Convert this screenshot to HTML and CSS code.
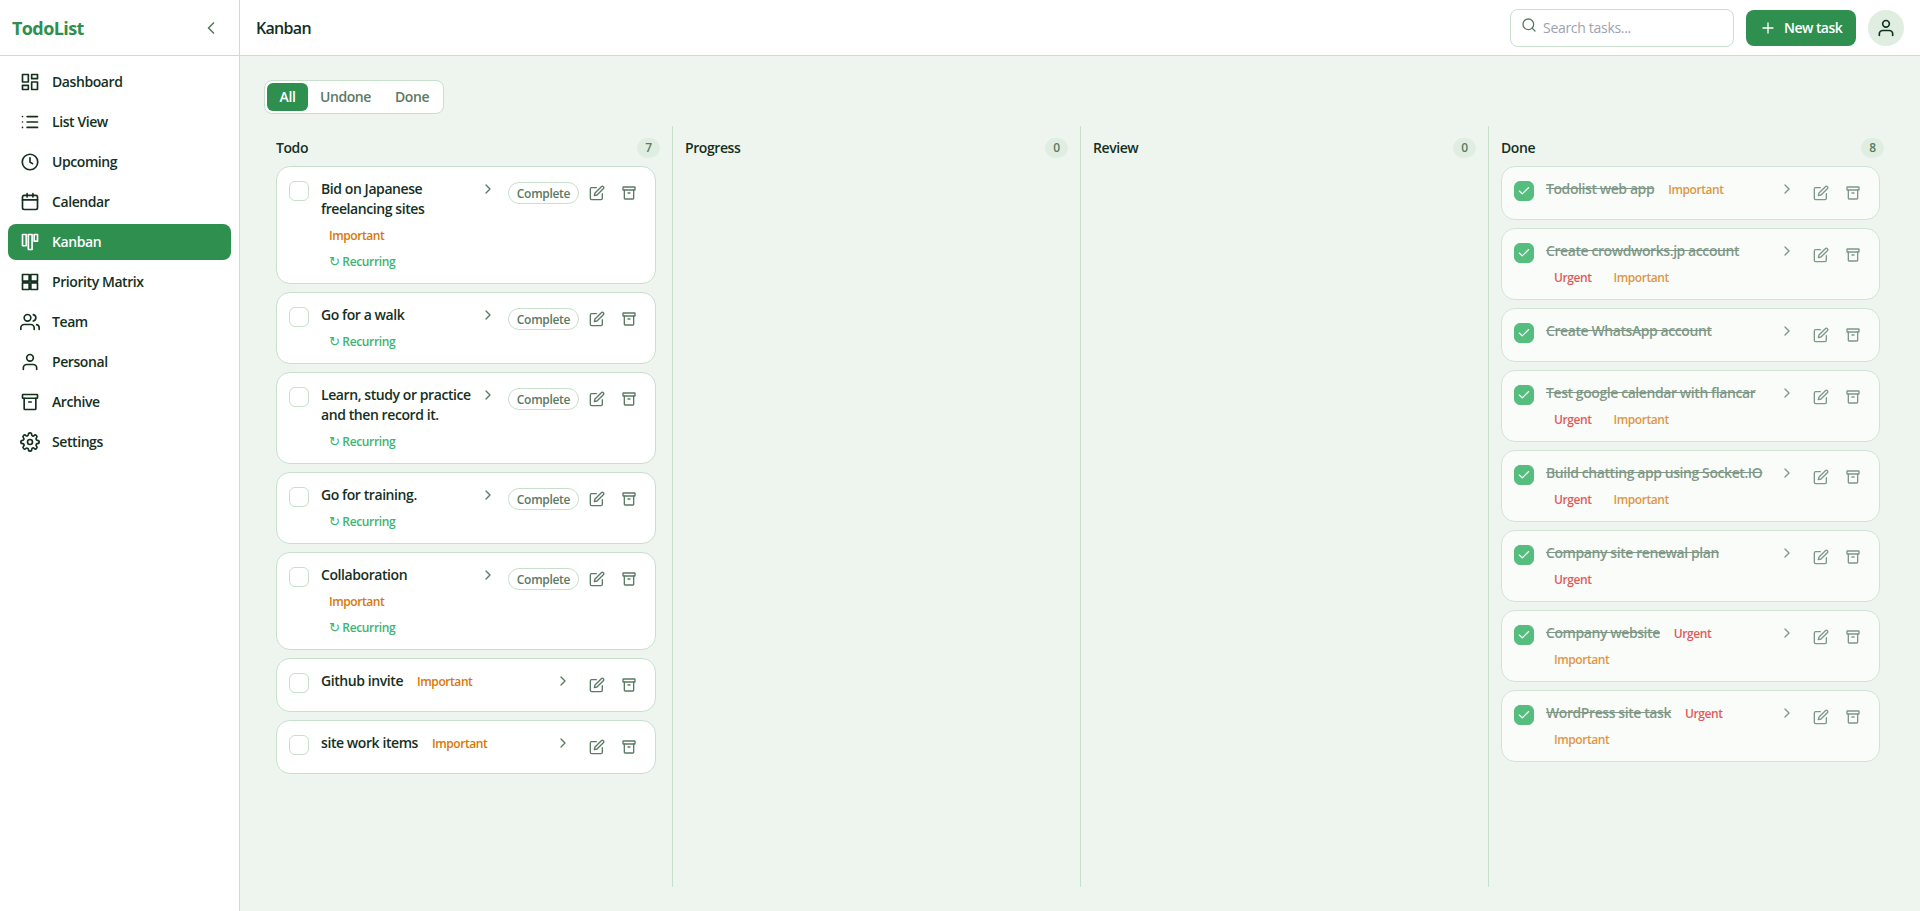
FILE: index.html
```html
<!DOCTYPE html>
<html lang="en">
<head>
  <meta charset="UTF-8" />
  <meta name="viewport" content="width=device-width, initial-scale=1.0" />
  <title>TodoList - Kanban</title>
  <link rel="stylesheet" href="styles.css">
</head>
<body>
  <!-- icon sprite -->
  <svg class="sprite" aria-hidden="true">
    <symbol id="i-dashboard" viewBox="0 0 24 24"><rect x="3" y="3" width="7" height="9"/><rect x="14" y="3" width="7" height="5"/><rect x="14" y="12" width="7" height="9"/><rect x="3" y="16" width="7" height="5"/></symbol>
    <symbol id="i-list" viewBox="0 0 24 24"><path d="M8.5 5.5H21M8.5 12H21M8.5 18.5H21M3 5.5h.01M3 12h.01M3 18.5h.01"/></symbol>
    <symbol id="i-clock" viewBox="0 0 24 24"><circle cx="12" cy="12" r="9.3"/><path d="M12 7v5l3 2"/></symbol>
    <symbol id="i-calendar" viewBox="0 0 24 24"><rect x="3" y="4" width="18" height="17" rx="2"/><path d="M15.5 2v4M8.5 2v4M3 9.5h18"/></symbol>
    <symbol id="i-kanban" viewBox="0 0 24 24"><rect x="3" y="3" width="4.5" height="13.5"/><rect x="10" y="3" width="4.5" height="18"/><rect x="17" y="3" width="4" height="8"/></symbol>
    <symbol id="i-grid" viewBox="0 0 24 24"><rect x="3" y="3" width="8" height="8"/><rect x="13" y="3" width="8" height="8"/><rect x="13" y="13" width="8" height="8"/><rect x="3" y="13" width="8" height="8"/></symbol>
    <symbol id="i-team" viewBox="0 0 24 24"><path d="M17 21v-2a4 4 0 0 0-4-4H5a4 4 0 0 0-4 4v2"/><circle cx="9" cy="7" r="4"/><path d="M23 21v-2a4 4 0 0 0-3-3.87M16 3.13a4 4 0 0 1 0 7.75"/></symbol>
    <symbol id="i-user" viewBox="0 0 24 24"><path d="M20 21v-2a4 4 0 0 0-4-4H8a4 4 0 0 0-4 4v2"/><circle cx="12" cy="7" r="4"/></symbol>
    <symbol id="i-archive" viewBox="0 0 24 24"><rect x="3" y="3" width="18" height="4.5" rx=".5"/><path d="M5 7.5V20a1 1 0 0 0 1 1h12a1 1 0 0 0 1-1V7.5M10.5 12h3"/></symbol>
    <symbol id="i-settings" viewBox="0 0 24 24"><circle cx="12" cy="12" r="3"/><path d="M19.4 15a1.65 1.65 0 0 0 .33 1.82l.06.06a2 2 0 0 1-2.83 2.83l-.06-.06a1.65 1.65 0 0 0-2.8 1.17V21a2 2 0 0 1-4 0v-.09A1.65 1.65 0 0 0 9 19.4a1.65 1.65 0 0 0-1.82.33l-.06.06a2 2 0 0 1-2.83-2.83l.06-.06A1.65 1.65 0 0 0 3.09 14H3a2 2 0 0 1 0-4h.09A1.65 1.65 0 0 0 4.6 9a1.65 1.65 0 0 0-.33-1.82l-.06-.06a2 2 0 0 1 2.83-2.83l.06.06A1.65 1.65 0 0 0 9 4.6a1.65 1.65 0 0 0 1-1.51V3a2 2 0 0 1 4 0v.09a1.65 1.65 0 0 0 2.82 1.26l.06-.06a2 2 0 0 1 2.83 2.83l-.06.06A1.65 1.65 0 0 0 19.4 9a1.65 1.65 0 0 0 1.51 1H21a2 2 0 0 1 0 4h-.09a1.65 1.65 0 0 0-1.51 1z"/></symbol>
    <symbol id="i-left" viewBox="0 0 24 24"><path d="M15 18l-6-6 6-6"/></symbol>
    <symbol id="i-right" viewBox="0 0 24 24"><path d="M9 18l6-6-6-6"/></symbol>
    <symbol id="i-search" viewBox="0 0 24 24"><circle cx="11" cy="11" r="8"/><path d="M21 21l-4.35-4.35"/></symbol>
    <symbol id="i-plus" viewBox="0 0 24 24"><path d="M12 4.5v15M4.5 12h15"/></symbol>
    <symbol id="i-edit" viewBox="0 0 24 24"><path d="M11 4H4a2 2 0 0 0-2 2v14a2 2 0 0 0 2 2h14a2 2 0 0 0 2-2v-7"/><path d="M18.5 2.5a2.12 2.12 0 0 1 3 3L12 15l-4 1 1-4z"/></symbol>
    <symbol id="i-check" viewBox="0 0 24 24"><path d="M20 6L9 17l-5-5"/></symbol>
  </svg>

  <div class="app">
    <aside class="sidebar">
      <div class="brand">
        <span class="brand-name">TodoList</span>
        <button class="collapse"><svg class="icon"><use href="#i-left"/></svg></button>
      </div>
      <nav class="nav">
        <a class="nav-item"><svg class="icon"><use href="#i-dashboard"/></svg>Dashboard</a>
        <a class="nav-item"><svg class="icon"><use href="#i-list"/></svg>List View</a>
        <a class="nav-item"><svg class="icon"><use href="#i-clock"/></svg>Upcoming</a>
        <a class="nav-item"><svg class="icon"><use href="#i-calendar"/></svg>Calendar</a>
        <a class="nav-item active"><svg class="icon"><use href="#i-kanban"/></svg>Kanban</a>
        <a class="nav-item"><svg class="icon"><use href="#i-grid"/></svg>Priority Matrix</a>
        <a class="nav-item"><svg class="icon"><use href="#i-team"/></svg>Team</a>
        <a class="nav-item"><svg class="icon"><use href="#i-user"/></svg>Personal</a>
        <a class="nav-item"><svg class="icon"><use href="#i-archive"/></svg>Archive</a>
        <a class="nav-item"><svg class="icon"><use href="#i-settings"/></svg>Settings</a>
      </nav>
    </aside>

    <div class="main">
      <header class="topbar">
        <h1>Kanban</h1>
        <label class="search">
          <svg class="icon small"><use href="#i-search"/></svg>
          <input type="text" placeholder="Search tasks...">
        </label>
        <button class="new-task"><svg class="icon small"><use href="#i-plus"/></svg>New task</button>
        <button class="avatar"><svg class="icon"><use href="#i-user"/></svg></button>
      </header>

      <main class="content">
        <div class="filters">
          <button class="filter active">All</button>
          <button class="filter">Undone</button>
          <button class="filter">Done</button>
        </div>
        <div class="board" id="board"></div>
      </main>
    </div>
  </div>

  <script>
    const columns = [
      { name: "Todo", tasks: [
        { title: "Bid on Japanese freelancing sites", tags: ["Important", "Recurring"] },
        { title: "Go for a walk", tags: ["Recurring"] },
        { title: "Learn, study or practice and then record it.", tags: ["Recurring"] },
        { title: "Go for training.", tags: ["Recurring"] },
        { title: "Collaboration", tags: ["Important", "Recurring"] },
        { title: "Github invite", tags: ["Important"] },
        { title: "site work items", tags: ["Important"] },
      ] },
      { name: "Progress", tasks: [] },
      { name: "Review", tasks: [] },
      { name: "Done", done: true, tasks: [
        { title: "Todolist web app", tags: ["Important"] },
        { title: "Create crowdworks.jp account", tags: ["Urgent", "Important"] },
        { title: "Create WhatsApp account", tags: [] },
        { title: "Test google calendar with flancar", tags: ["Urgent", "Important"] },
        { title: "Build chatting app using Socket.IO", tags: ["Urgent", "Important"] },
        { title: "Company site renewal plan", tags: ["Urgent"] },
        { title: "Company website", tags: ["Urgent", "Important"] },
        { title: "WordPress site task", tags: ["Urgent", "Important"] },
      ] },
    ];

    const icon = (name, cls = "") => `<svg class="icon ${cls}"><use href="#i-${name}"/></svg>`;

    function renderTag(tag) {
      const mark = tag === "Recurring" ? '<span class="loop">↻</span> ' : "";
      return `<span class="tag ${tag.toLowerCase()}">${mark}${tag}</span>`;
    }

    function renderCard(task, done) {
      const recurring = task.tags.includes("Recurring");
      return `
        <article class="card ${done ? "done" : ""}">
          <span class="checkbox">${done ? icon("check", "tick") : ""}</span>
          <div class="info">
            <span class="title">${task.title}</span>
            ${task.tags.map(renderTag).join("")}
          </div>
          <span class="expand">${icon("right", "small")}</span>
          <div class="actions">
            ${recurring ? '<button class="complete">Complete</button>' : ""}
            <button class="action">${icon("edit", "small")}</button>
            <button class="action">${icon("archive", "small")}</button>
          </div>
        </article>`;
    }

    document.getElementById("board").innerHTML = columns.map(col => `
      <section class="column">
        <div class="column-head"><h2>${col.name}</h2><span class="count">${col.tasks.length}</span></div>
        <div class="cards">${col.tasks.map(t => renderCard(t, col.done)).join("")}</div>
      </section>`).join("");
  </script>
</body>
</html>
```

FILE: styles.css
```css
:root {
  --green: #2e8f4f;
  --green-light: #3cb46e;
  --bg: #eef5ee;
  --soft: #e0eee2;
  --border: #c8dfcc;
  --text: #14301f;
  --muted: #5a7a64;
}

* {
  box-sizing: border-box;
}

body {
  margin: 0;
  background: var(--bg);
  color: var(--text);
  font-family: "Open Sans", "Noto Sans", sans-serif;
  font-size: 14px;
  font-weight: 600;
  line-height: 20px;
  letter-spacing: -0.42px;
}

button, input {
  font: inherit;
  letter-spacing: inherit;
  color: inherit;
  border: none;
  background: none;
  padding: 0;
}

h1, h2 {
  margin: 0;
  font-weight: 600;
}

.sprite {
  display: none;
}

.icon {
  width: 20px;
  height: 20px;
  flex-shrink: 0;
  display: block;
  fill: none;
  stroke: currentColor;
  stroke-width: 2;
  stroke-linecap: round;
  stroke-linejoin: round;
}

.icon.small {
  width: 16px;
  height: 16px;
}

.icon.tick {
  width: 14px;
  height: 14px;
}

.app {
  display: flex;
  height: 100vh;
}

/* Sidebar */
.sidebar {
  width: 240px;
  flex-shrink: 0;
  background: #fff;
  border-right: 1px solid var(--border);
}

.brand {
  display: flex;
  align-items: center;
  justify-content: space-between;
  height: 56px;
  padding: 0 18px 0 12px;
  border-bottom: 1px solid var(--border);
}

.brand-name {
  font-size: 18px;
  font-weight: 700;
  letter-spacing: -0.6px;
  color: var(--green);
}

.collapse {
  color: var(--muted);
}

.nav {
  display: flex;
  flex-direction: column;
  gap: 4px;
  padding: 8px;
}

.nav-item {
  display: flex;
  align-items: center;
  gap: 12px;
  height: 36px;
  padding: 0 12px;
  border-radius: 8px;
}

.nav-item.active {
  background: var(--green);
  color: #fff;
}

/* Top bar */
.main {
  flex: 1;
  min-width: 0;
  display: flex;
  flex-direction: column;
}

.topbar {
  display: flex;
  align-items: center;
  gap: 12px;
  height: 56px;
  padding: 0 16px;
  background: #fff;
  border-bottom: 1px solid var(--border);
}

.topbar h1 {
  flex: 1;
  font-size: 16px;
  letter-spacing: -0.7px;
}

.search {
  display: flex;
  align-items: center;
  gap: 6px;
  width: 224px;
  height: 38px;
  padding: 0 10px;
  border: 1px solid var(--border);
  border-radius: 8px;
  color: var(--muted);
}

.search .icon {
  margin-bottom: 5px;
}

.search input {
  flex: 1;
  min-width: 0;
  font-weight: 400;
  letter-spacing: -0.3px;
}

.search input::placeholder {
  color: #9ca3af;
}

.new-task {
  display: flex;
  align-items: center;
  gap: 8px;
  width: 110px;
  height: 36px;
  padding: 0 14px;
  border-radius: 8px;
  background: var(--green);
  color: #fff;
  letter-spacing: -0.55px;
  white-space: nowrap;
}

.avatar {
  display: grid;
  place-items: center;
  width: 36px;
  height: 36px;
  border-radius: 50%;
  background: var(--soft);
}

/* Board */
.content {
  flex: 1;
  min-height: 0;
  display: flex;
  flex-direction: column;
  gap: 12px;
  padding: 24px;
}

.filters {
  display: flex;
  align-self: flex-start;
  padding: 2px;
  border: 1px solid var(--border);
  border-radius: 8px;
  background: #fff;
}

.filter {
  min-width: 41px;
  height: 28px;
  padding: 0 12px;
  border-radius: 6px;
  color: var(--muted);
}

.filter.active {
  background: var(--green);
  color: #fff;
}

.board {
  flex: 1;
  min-height: 0;
  display: grid;
  grid-template-columns: repeat(4, 1fr);
}

.column {
  padding: 12px;
}

.column + .column {
  border-left: 1px solid var(--border);
}

.column-head {
  display: flex;
  align-items: center;
  justify-content: space-between;
  margin-bottom: 8px;
}

.column-head h2 {
  font-size: 14px;
}

.count {
  padding: 2px 8px;
  border-radius: 10px;
  background: var(--soft);
  color: var(--muted);
  font-size: 12px;
  line-height: 16px;
  letter-spacing: 0;
}

.cards {
  display: flex;
  flex-direction: column;
  gap: 8px;
  padding-right: 4px;
}

.card {
  display: flex;
  align-items: flex-start;
  padding: 12px;
  border: 1px solid var(--border);
  border-radius: 14px;
  background: #fff;
}

.card.done {
  opacity: 0.75;
}

.checkbox {
  display: grid;
  place-items: center;
  flex-shrink: 0;
  width: 20px;
  height: 20px;
  margin: 2px 12px 0 0;
  border: 1px solid var(--border);
  border-radius: 6px;
}

.done .checkbox {
  border-color: #22ab58;
  background: #22ab58;
  color: #fff;
}

.info {
  flex: 1;
  min-width: 0;
  display: flex;
  flex-wrap: wrap;
  gap: 6px;
}

.done .title {
  color: var(--muted);
  text-decoration: line-through;
}

.tag {
  padding: 3px 8px 1px;
  font-size: 12px;
  line-height: 16px;
}

.important {
  color: #d97706;
}

.urgent {
  color: #dc2626;
}

.recurring {
  color: var(--green-light);
  letter-spacing: -0.35px;
}

.loop {
  font-family: "DejaVu Sans", sans-serif;
  font-size: 13px;
  font-weight: 400;
  line-height: 1;
}

.expand {
  padding: 2px 0;
  margin: 0 12px 0 8px;
  color: var(--muted);
}

.actions {
  display: flex;
  align-items: center;
  gap: 4px;
  color: var(--muted);
}

.complete {
  width: 71px;
  height: 22px;
  padding: 1px 0 0;
  border: 1px solid var(--border);
  border-radius: 11px;
  font-size: 12px;
  line-height: 19px;
  letter-spacing: -0.3px;
}

.action {
  display: grid;
  place-items: center;
  width: 28px;
  height: 28px;
}
```
